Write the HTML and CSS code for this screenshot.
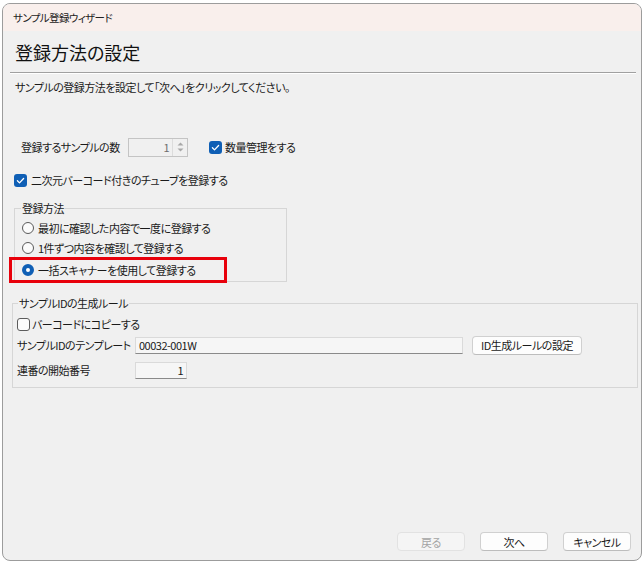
FILE: index.html
```html
<!DOCTYPE html>
<html lang="ja">
<head>
  <meta charset="UTF-8">
  <title>サンプル登録ウィザード</title>
  <link rel="stylesheet" href="styles.css">
</head>
<body>
  <div class="window">
    <div class="titlebar">サンプル登録ウィザード</div>
    <div class="header"><h1>登録方法の設定</h1></div>
    <div class="separator"></div>
    <p class="desc">サンプルの登録方法を設定して「次へ」をクリックしてください。</p>

    <div class="count-row">
      <span class="count-label">登録するサンプルの数</span>
      <div class="spin">
        <span class="spin-value">1</span>
        <span class="spin-arrows">
          <svg width="9" height="14" viewBox="0 0 9 14"><path d="M1.5 5.5 L4.5 2.5 L7.5 5.5 Z" fill="#a8a8a8"/><path d="M1.5 8.5 L4.5 11.5 L7.5 8.5 Z" fill="#a8a8a8"/></svg>
        </span>
      </div>
      <span class="check qty">
        <span class="box checked"><svg width="13" height="13" viewBox="0 0 13 13"><path d="M3.4 6.8 L5.5 8.9 L9.6 4.5" fill="none" stroke="#fff" stroke-width="1.3" stroke-linecap="round" stroke-linejoin="round"/></svg></span>
        数量管理をする
      </span>
    </div>

    <div class="check tube">
      <span class="box checked"><svg width="13" height="13" viewBox="0 0 13 13"><path d="M3.4 6.8 L5.5 8.9 L9.6 4.5" fill="none" stroke="#fff" stroke-width="1.3" stroke-linecap="round" stroke-linejoin="round"/></svg></span>
      二次元バーコード付きのチューブを登録する
    </div>

    <fieldset class="group method">
      <legend>登録方法</legend>
      <div class="radio-row"><span class="radio"></span>最初に確認した内容で一度に登録する</div>
      <div class="radio-row"><span class="radio"></span>1件ずつ内容を確認して登録する</div>
      <div class="radio-row last"><span class="radio selected"></span>一括スキャナーを使用して登録する<span class="highlight"></span></div>
    </fieldset>

    <fieldset class="group idrule">
      <legend>サンプルIDの生成ルール</legend>
      <div class="check copy"><span class="box"></span>バーコードにコピーする</div>
      <div class="field-row">
        <span class="field-label">サンプルIDのテンプレート</span>
        <div class="textbox template">00032-001W</div>
        <button class="btn rule-btn">ID生成ルールの設定</button>
      </div>
      <div class="field-row start">
        <span class="field-label">連番の開始番号</span>
        <div class="textbox number">1</div>
      </div>
    </fieldset>

    <div class="footer">
      <button class="btn nav" disabled>戻る</button>
      <button class="btn nav">次へ</button>
      <button class="btn nav">キャンセル</button>
    </div>
  </div>
</body>
</html>
```

FILE: styles.css
```css
body {
  margin: 0;
  background: #fff;
  font-family: "Noto Sans CJK JP", "Noto Sans", sans-serif;
  font-size: 11px;
  letter-spacing: -0.5px;
  font-feature-settings: "palt";
  color: #1a1a1a;
  white-space: nowrap;
}

.window {
  margin: 3px 0 0 2px;
  width: 638px;
  height: 556px;
  border: 1px solid #9c9c9c;
  border-radius: 8px;
  background: #f0f0f0;
  overflow: hidden;
  display: flex;
  flex-direction: column;
}

.titlebar {
  height: 27px;
  flex: none;
  padding: 0 0 1px 10px;
  box-sizing: border-box;
  background: #f9efec;
  display: flex;
  align-items: center;
  font-size: 10.5px;
  letter-spacing: -0.6px;
  color: #222;
}

.header {
  height: 41px;
  flex: none;
  padding-left: 12px;
  display: flex;
  align-items: center;
}

h1 {
  margin: 0;
  font-size: 18px;
  font-weight: normal;
  letter-spacing: 0;
  color: #111;
}

.separator {
  margin: 0 5px 0 7px;
  border-top: 1px solid #a0a0a0;
  border-bottom: 1px solid #fff;
}

.desc {
  margin: 5px 0 0;
  padding-left: 12px;
  line-height: 16px;
}

.count-row {
  margin-top: 42px;
  padding-left: 18px;
  height: 20px;
  display: flex;
  align-items: center;
}

.count-label {
  width: 107px;
}

.spin {
  width: 60px;
  height: 19px;
  box-sizing: border-box;
  border: 1px solid #c4c4c4;
  background: #f0f0f0;
  display: flex;
  align-items: center;
}

.spin-value {
  flex: 1;
  text-align: right;
  padding-right: 3px;
  color: #6e6e6e;
}

.spin-arrows {
  width: 14px;
  height: 17px;
  border-left: 1px solid #dcdcdc;
  display: flex;
  align-items: center;
  justify-content: center;
}

.check {
  display: flex;
  align-items: center;
  height: 16px;
}

.box {
  width: 13px;
  height: 13px;
  box-sizing: border-box;
  border: 1px solid #5c5c5c;
  border-radius: 3px;
  background: #fbfbfb;
  margin-right: 3px;
  flex: none;
}

.box.checked {
  border: none;
  background: #0f5fb5;
}

.box svg {
  display: block;
}

.qty {
  margin-left: 21px;
}

.tube {
  margin-top: 15px;
  padding-left: 11px;
}

.tube .box {
  margin-right: 4px;
}

.group {
  border: 1px solid #d6d6d6;
  margin: 0;
  min-width: 0;
}

.group legend {
  padding: 0 1px;
  line-height: 16px;
}

.method {
  margin: 12px 0 0 11px;
  width: 273px;
  box-sizing: border-box;
  padding: 0 0 1px 7px;
}

.method legend {
  margin-left: -1px;
}

.radio-row {
  height: 20px;
  display: flex;
  align-items: center;
  position: relative;
}

.radio-row:first-of-type {
  margin-top: 2px;
}

.radio-row.last {
  margin-top: 2px;
}

.radio {
  width: 12px;
  height: 12px;
  box-sizing: border-box;
  border: 1px solid #5a5a5a;
  border-radius: 50%;
  background: #fbfbfb;
  margin-right: 4px;
  flex: none;
}

.radio.selected {
  border: 4px solid #0f5fb5;
  background: #fff;
}

.highlight {
  position: absolute;
  left: -13px;
  top: -3px;
  width: 218px;
  height: 26px;
  box-sizing: border-box;
  border: 3px solid #e8000b;
}

.idrule {
  margin: 13px 3px 0 9px;
  padding: 0 0 7px 4px;
}

.idrule legend {
  margin-left: 1px;
}

.copy {
  margin-top: 5px;
}

.copy .box {
  margin-right: 2px;
}

.field-row {
  display: flex;
  align-items: center;
  height: 20px;
  margin-top: 3px;
}

.field-row.start {
  margin-top: 5px;
}

.field-label {
  width: 118px;
}

.textbox {
  height: 17px;
  box-sizing: border-box;
  border: 1px solid #dadada;
  border-bottom-color: #8a8a8a;
  background: #f6f6f6;
  line-height: 15px;
  padding: 0 3px;
  font-size: 11px;
}

.template {
  width: 328px;
}

.number {
  width: 52px;
  text-align: right;
}

.btn {
  font-family: inherit;
  font-size: 11px;
  letter-spacing: -0.5px;
  font-feature-settings: "palt";
  color: #1a1a1a;
  background: #fdfdfd;
  border: 1px solid #d0d0d0;
  border-bottom-color: #bdbdbd;
  border-radius: 4px;
  padding: 0;
  height: 19px;
  box-sizing: border-box;
  line-height: 16px;
}

.rule-btn {
  width: 110px;
  margin-left: 9px;
}

.footer {
  margin-top: auto;
  padding: 0 10px 9px 0;
  display: flex;
  justify-content: flex-end;
  gap: 15px;
}

.nav {
  width: 68px;
}

.nav:disabled {
  color: #a4a4a4;
  background: #f5f5f5;
  border-color: #e2e2e2;
}
```
